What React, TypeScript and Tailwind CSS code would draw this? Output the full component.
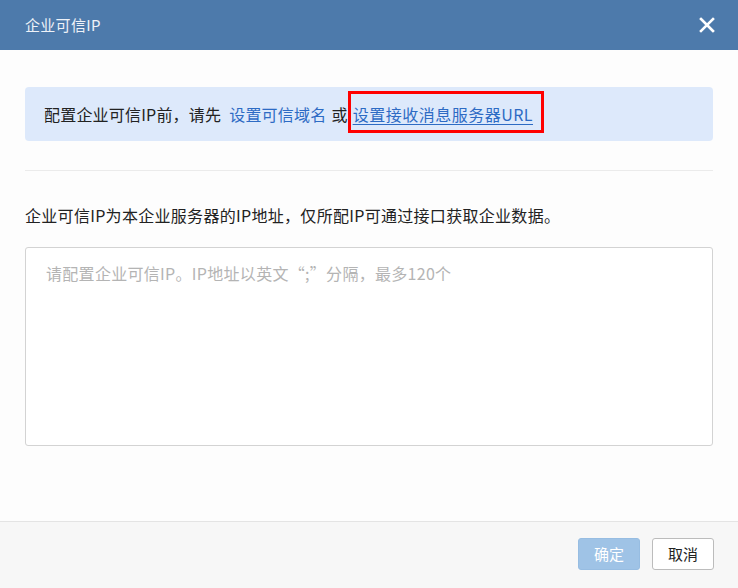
const font = "font-['PingFang_SC','Noto_Sans_CJK_SC',sans-serif]"

function CloseIcon() {
  return (
    <svg width="16" height="16" viewBox="0 0 16 16" className="block">
      <path d="M2 2 L14 14 M14 2 L2 14" stroke="#fff" strokeWidth="2.6" strokeLinecap="square" />
    </svg>
  )
}

export default function App() {
  return (
    <div className={`w-[738px] h-[588px] flex flex-col bg-[#fdfdfd] ${font}`}>
      {/* Header */}
      <div className="h-[50px] shrink-0 bg-[#4d7aab] flex items-center justify-between pl-[25px] pr-[23px]">
        <span className="text-[15px] text-[#eef2f8] tracking-[0.3px]">企业可信IP</span>
        <CloseIcon />
      </div>

      {/* Body */}
      <div className="flex-1 px-[25px] pt-[37px]">
        <div className="h-[54px] rounded-[4px] bg-[#dde9fb] flex items-center pl-[19px] text-[16px] text-[#222] tracking-[0.2px]">
          <span>配置企业可信IP前，请先</span>
          <span className="ml-[8px] text-[#2d6bc4]">设置可信域名</span>
          <span className="ml-[5px]">或</span>
          <span className="relative ml-[5px]">
            <span className="text-[#2d6bc4] underline underline-offset-[3px] tracking-[0.5px]">设置接收消息服务器URL</span>
            <span className="absolute left-[-5px] right-[-11px] top-[-11px] bottom-[-7px] border-[3px] border-[#ff0000]" />
          </span>
        </div>

        <div className="mt-[29px] h-px bg-[#ebebeb]" />

        <p className="mt-[33px] text-[16px] leading-[22px] text-[#222] tracking-[0.3px]">
          企业可信IP为本企业服务器的IP地址，仅所配IP可通过接口获取企业数据。
        </p>

        <textarea
          className="mt-[21px] block w-full h-[199px] resize-none rounded-[3px] border border-[#d3d3d3] bg-white px-[20px] py-[14px] text-[16px] leading-[22px] tracking-[0.3px] text-[#222] placeholder:text-[#b4b4b4] outline-none"
          placeholder="请配置企业可信IP。IP地址以英文“;”分隔，最多120个"
        />
      </div>

      {/* Footer */}
      <div className="h-[67px] shrink-0 border-t border-[#e4e4e4] bg-[#f7f7f7] flex items-start justify-end gap-[12px] pr-[24px] pt-[16px]">
        <button className="w-[62px] h-[32px] rounded-[3px] bg-[#9fc3e6] border border-[#97bde2] text-[15px] text-white">
          确定
        </button>
        <button className="w-[62px] h-[32px] rounded-[3px] bg-white border border-[#bcbcbc] text-[15px] text-[#222]">
          取消
        </button>
      </div>
    </div>
  )
}
